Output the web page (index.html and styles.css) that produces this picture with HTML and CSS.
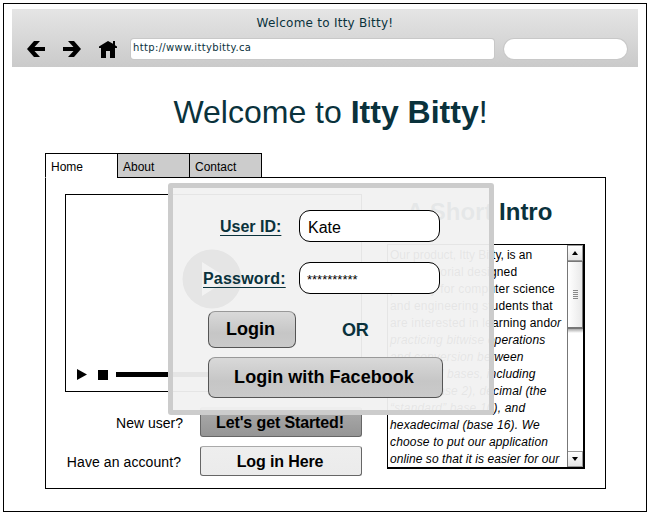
FILE: index.html
```html
<!DOCTYPE html>
<html lang="en">
<head>
<meta charset="utf-8">
<title>Welcome to Itty Bitty!</title>
<link rel="stylesheet" href="styles.css">
</head>
<body>
<div class="window">
  <header class="browser">
    <div class="browser-title">Welcome to Itty Bitty!</div>
    <div class="toolbar">
      <svg class="nav-icon" width="18" height="16" viewBox="0 0 18 16"><path d="M0 8 7 0h6L7.500 6H18v4H7.500L13 16H7Z"/></svg>
      <svg class="nav-icon" width="18" height="16" viewBox="0 0 18 16"><path d="M18 8 11 0H5l5.500 6H0v4h10.500L5 16h6Z"/></svg>
      <svg class="nav-icon home" width="18" height="17" viewBox="0 0 18 17"><path d="M9 0 0 5.500V7h2v10h5v-7h4v7h5V7h2V5.500l-2-1.200V0h-2v2.800Z"/></svg>
      <div class="address">http://www.ittybitty.ca</div>
      <div class="search"></div>
    </div>
  </header>
  <h1 class="title">Welcome to <b>Itty Bitty</b>!</h1>
  <nav class="tabs">
    <a class="tab active">Home</a><a class="tab">About</a><a class="tab">Contact</a>
  </nav>
  <main class="panel">
    <section class="left">
      <div class="video">
        <svg class="big-play" width="60" height="60" viewBox="0 0 60 60"><circle cx="30" cy="30" r="29.500"/><path d="M20 13v34l27-17Z"/></svg>
        <div class="controls">
          <svg width="10" height="11" viewBox="0 0 10 11"><path d="M0 0v11l10-5.500Z"/></svg>
          <span class="stop"></span>
          <span class="track"></span>
        </div>
      </div>
      <div class="action new"><span class="question">New user?</span><button class="wide dark">Let's get Started!</button></div>
      <div class="action have"><span class="question">Have an account?</span><button class="wide">Log in Here</button></div>
    </section>
    <section class="right">
      <h2 class="intro-title">A Short Intro</h2>
      <div class="intro">
        <div class="copy">
          <div class="tight">Our product, Itty Bitty, is an</div>
          <div>online tutorial designed</div>
          <div>primarily for computer science</div>
          <div>and engineering students that</div>
          <div>are interested in learning and<i>or</i></div>
          <div class="it">practicing bitwise operations</div>
          <div class="it">and conversion between</div>
          <div class="it">numerical bases, including</div>
          <div class="it">binary (base 2), decimal (the</div>
          <div class="it">“standard” base 10), and</div>
          <div class="it">hexadecimal (base 16). We</div>
          <div class="it">choose to put our application</div>
          <div class="it close">online so that it is easier for our</div>
        </div>
        <div class="scrollbar">
          <div class="arrow"><svg width="6" height="4" viewBox="0 0 6 4"><path d="M0 4h6L3 0Z"/></svg></div>
          <div class="thumb"><span></span><span></span><span></span><span></span><span></span></div>
          <div class="rail"></div>
          <div class="arrow bottom"><svg width="6" height="4" viewBox="0 0 6 4"><path d="M0 0h6L3 4Z"/></svg></div>
        </div>
      </div>
    </section>
  </main>
  <div class="modal">
    <div class="field"><span class="label">User ID:</span><span class="input">Kate</span></div>
    <div class="field second"><span class="label pw">Password:</span><span class="input secret">**********</span></div>
    <div class="login-row"><button class="btn login">Login</button><span class="or">OR</span></div>
    <button class="btn facebook">Login with Facebook</button>
  </div>
</div>
</body>
</html>
```
FILE: styles.css
```css
* { box-sizing: border-box; }
body {
  margin: 0;
  padding: 3px;
  background: #fff;
  color: #000;
  font-family: "Liberation Sans", Arial, sans-serif;
}
button { font-family: inherit; font-weight: bold; color: #000; padding: 0; }
svg { display: block; }

.window {
  position: relative;
  width: 644px;
  height: 509px;
  border: 1px solid #000;
  padding: 5px 8px;
}

.browser {
  height: 58px;
  padding: 5px 10px 0 14px;
  background: linear-gradient(#e5e5e5, #cacaca);
  font-family: "DejaVu Sans", Verdana, sans-serif;
  color: #0a323c;
}
.browser-title { height: 25px; line-height: 18px; font-size: 12px; letter-spacing: .25px; text-align: center; padding-right: 4px; }
.toolbar { display: flex; align-items: flex-start; }
.nav-icon { margin: 2px 18px 0 1px; flex: none; fill: #000; }
.nav-icon + .nav-icon { margin-left: 0; }
.nav-icon.home { margin-right: 14px; }
.address, .search { height: 20px; background: #fff; border-radius: 3px; box-shadow: 0 0 0 1px #c8c8c8; }
.address { width: 363px; padding-left: 2px; font-size: 10px; letter-spacing: .35px; line-height: 17px; }
.search { width: 123px; margin-left: 10px; border-radius: 10px; }

.title {
  margin: 26px 0 0 11px;
  height: 60px;
  line-height: 38px;
  font-size: 32px;
  font-weight: normal;
  color: #0a323c;
  text-align: center;
}

.tabs { display: flex; margin-left: 33px; position: relative; }
.tab {
  width: 73px;
  height: 25px;
  margin-right: -1px;
  padding: 6px 0 0 5px;
  border: 1px solid #000;
  background: #ccc;
  font-size: 12px;
  line-height: 14px;
}
.tab.active { background: #fff; border-bottom-color: #fff; }

.panel {
  display: flex;
  width: 561px;
  height: 312px;
  margin: -1px 0 0 33px;
  border: 1px solid #000;
  padding: 16px 19px 0 19px;
}
.left { width: 297px; }
.video { width: 297px; height: 198px; border: 1px solid #000; padding: 54px 11px 0; }
.big-play { margin-left: 105px; fill: #000; }
.big-play path { fill: #fff; }
.controls { display: flex; align-items: center; margin-top: 60px; height: 11px; }
.stop { width: 10px; height: 10px; margin: 0 8px 0 11px; background: #000; }
.track { width: 175px; height: 5px; background: #000; }
.action { display: flex; align-items: center; justify-content: flex-end; height: 30px; font-size: 14px; }
.question { padding-top: 2px; }
.action.new { margin-top: 15px; }
.action.have { margin-top: 9px; }
.new .question { margin-right: 17px; }
.have .question { margin-right: 19px; letter-spacing: .08px; }
.wide {
  width: 162px;
  height: 30px;
  border: 1px solid #666;
  border-top-color: #aaa;
  border-radius: 3px;
  background: linear-gradient(#eee, #ebebeb);
  font-size: 16px;
  letter-spacing: -.12px;
  padding: 2px 2px 0 0;
}
.wide.dark { background: linear-gradient(#ababab, #959595); }

.right { width: 198px; margin-left: 25px; }
.intro-title { margin: 4px 0 0; height: 46px; padding-right: 13px; font-size: 24px; line-height: 28px; color: #0a323c; text-align: center; }
.intro { display: flex; height: 225px; border: 1px solid #000; border-right-width: 2px; border-bottom-width: 2px; }
.copy { width: 180px; padding: 2px 0 0 2px; font-size: 12px; line-height: 17px; letter-spacing: .16px; white-space: nowrap; }
.tight { letter-spacing: -.06px; }
.close { letter-spacing: .07px; }
.it { font-style: italic; }
.scrollbar { width: 16px; border-left: 1px solid #777; display: flex; flex-direction: column; }
.arrow { height: 16px; border: 1px solid #999; border-left: 0; display: flex; align-items: center; justify-content: center; background: linear-gradient(#fff, #e5e5e5); }
.thumb { height: 68px; border: 1px solid #777; border-left: 0; border-bottom-width: 2px; background: linear-gradient(90deg, #fff, #e9e9e9); display: flex; flex-direction: column; align-items: center; justify-content: center; gap: 1px; }
.thumb span { width: 5px; height: 1px; background: #888; }
.rail { flex: 1; background: linear-gradient(#aaa, #fff 4px); }
.arrow.bottom { height: 16px; }

.modal {
  position: absolute;
  left: 164px;
  top: 179px;
  width: 326px;
  height: 232px;
  border: 5px solid #ccc;
  border-radius: 3px;
  background: rgba(241, 241, 241, .95);
  padding: 22px 0 0 29px;
}
.field { display: flex; align-items: center; height: 32px; }
.field.second { margin-top: 20px; }
.label { width: 97px; padding: 2px 0 0 18px; color: #0a323c; font-size: 16px; font-weight: bold; text-decoration: underline; text-underline-offset: 3px; text-decoration-thickness: 1px; }
.label.pw { padding-left: 1px; letter-spacing: .2px; }
.input { width: 141px; height: 32px; border: 1px solid #000; border-radius: 11px; background: #fff; padding-left: 8px; font-size: 16px; line-height: 34px; }
.input.secret { padding-left: 7px; font-size: 13px; }
.login-row { display: flex; align-items: center; margin: 17px 0 0 6px; }
.btn { display: block; border: 1px solid #555; border-top-color: #999; border-radius: 7px; background: linear-gradient(#d9d9d9, #c6c6c6 60%, #cacaca); font-size: 18px; padding-right: 3px; }
.login { width: 88px; height: 37px; }
.or { margin-left: 46px; padding-top: 2px; color: #0a323c; font-size: 18px; font-weight: bold; letter-spacing: -.3px; }
.facebook { width: 235px; height: 41px; margin: 9px 0 0 6px; letter-spacing: .04px; }
```
